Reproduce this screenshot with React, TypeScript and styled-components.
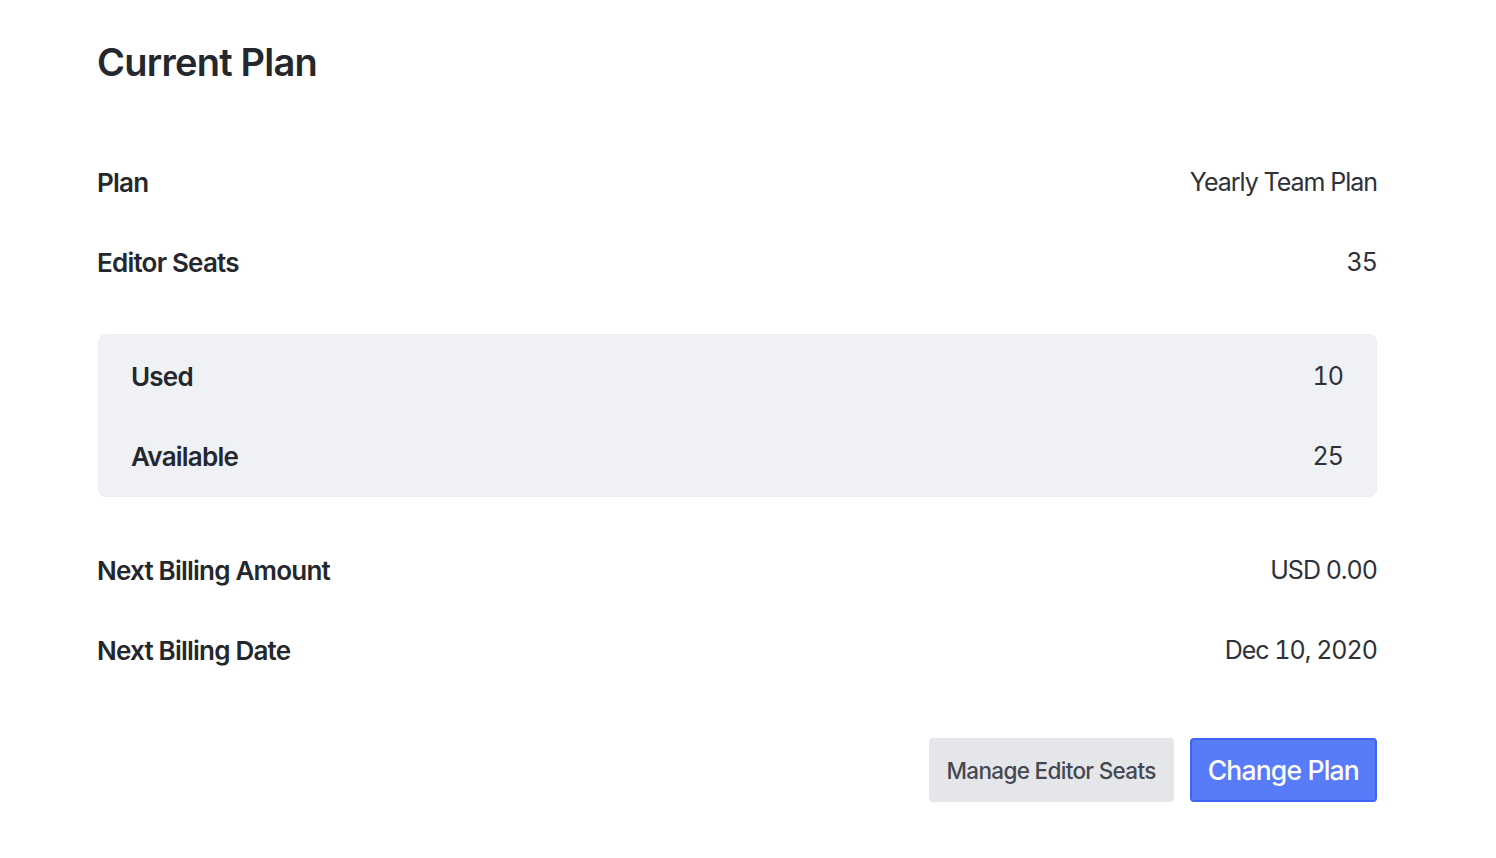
import styled, { createGlobalStyle } from "styled-components";

const GlobalStyle = createGlobalStyle`
  html, body {
    margin: 0;
    padding: 0;
    background: #ffffff;
  }
  body {
    font-family: Inter, "Noto Sans", sans-serif;
    color: #24272e;
    -webkit-font-smoothing: antialiased;
  }
`;

const Page = styled.main`
  width: 1280px;
  padding: 38px 0 0 97px;
`;

const Title = styled.h1`
  margin: 0 0 56px;
  font-size: 38px;
  line-height: 48px;
  font-weight: 600;
  letter-spacing: -0.02em;
  color: #24272e;
`;

const List = styled.dl`
  margin: 0;
  display: flex;
  flex-direction: column;
`;

const Row = styled.div`
  display: flex;
  justify-content: space-between;
  align-items: center;
  height: 80px;
`;

const Label = styled.dt`
  font-size: 26px;
  font-weight: 600;
  letter-spacing: -0.03em;
  color: #24272e;
`;

const Value = styled.dd`
  margin: 0;
  font-size: 25px;
  font-weight: 400;
  letter-spacing: -0.04em;
  font-variant-numeric: tabular-nums;
  color: #2e3139;
`;

const SeatsBox = styled.div`
  margin: 32px 0 33px 1px;
  padding: 1px 33px 0 32px;
  background: #f0f1f5;
  border: 1px solid #eceef2;
  border-radius: 8px;
  display: flex;
  flex-direction: column;
`;

const Actions = styled.div`
  display: flex;
  justify-content: flex-end;
  gap: 16px;
  margin-top: 48px;
`;

const Button = styled.button<{ $primary?: boolean }>`
  height: 64px;
  padding: 0 16px;
  border-radius: 4px;
  font-family: Inter, "Noto Sans", sans-serif;
  letter-spacing: -0.03em;
  cursor: pointer;
  border: 2px solid ${(p) => (p.$primary ? "#3f63f2" : "#e5e6ea")};
  background: ${(p) => (p.$primary ? "#577bf9" : "#e5e6ea")};
  color: ${(p) => (p.$primary ? "#ffffff" : "#454850")};
  font-size: ${(p) => (p.$primary ? "26.5px" : "22.5px")};
  font-weight: 500;
`;

export default function App() {
  return (
    <>
      <GlobalStyle />
      <Page>
        <Title>Current Plan</Title>
        <List>
          <Row>
            <Label>Plan</Label>
            <Value>Yearly Team Plan</Value>
          </Row>
          <Row>
            <Label>Editor Seats</Label>
            <Value>35</Value>
          </Row>
          <SeatsBox>
            <Row>
              <Label>Used</Label>
              <Value>10</Value>
            </Row>
            <Row>
              <Label>Available</Label>
              <Value>25</Value>
            </Row>
          </SeatsBox>
          <Row>
            <Label>Next Billing Amount</Label>
            <Value>USD 0.00</Value>
          </Row>
          <Row>
            <Label>Next Billing Date</Label>
            <Value>Dec 10, 2020</Value>
          </Row>
        </List>
        <Actions>
          <Button>Manage Editor Seats</Button>
          <Button $primary>Change Plan</Button>
        </Actions>
      </Page>
    </>
  );
}
